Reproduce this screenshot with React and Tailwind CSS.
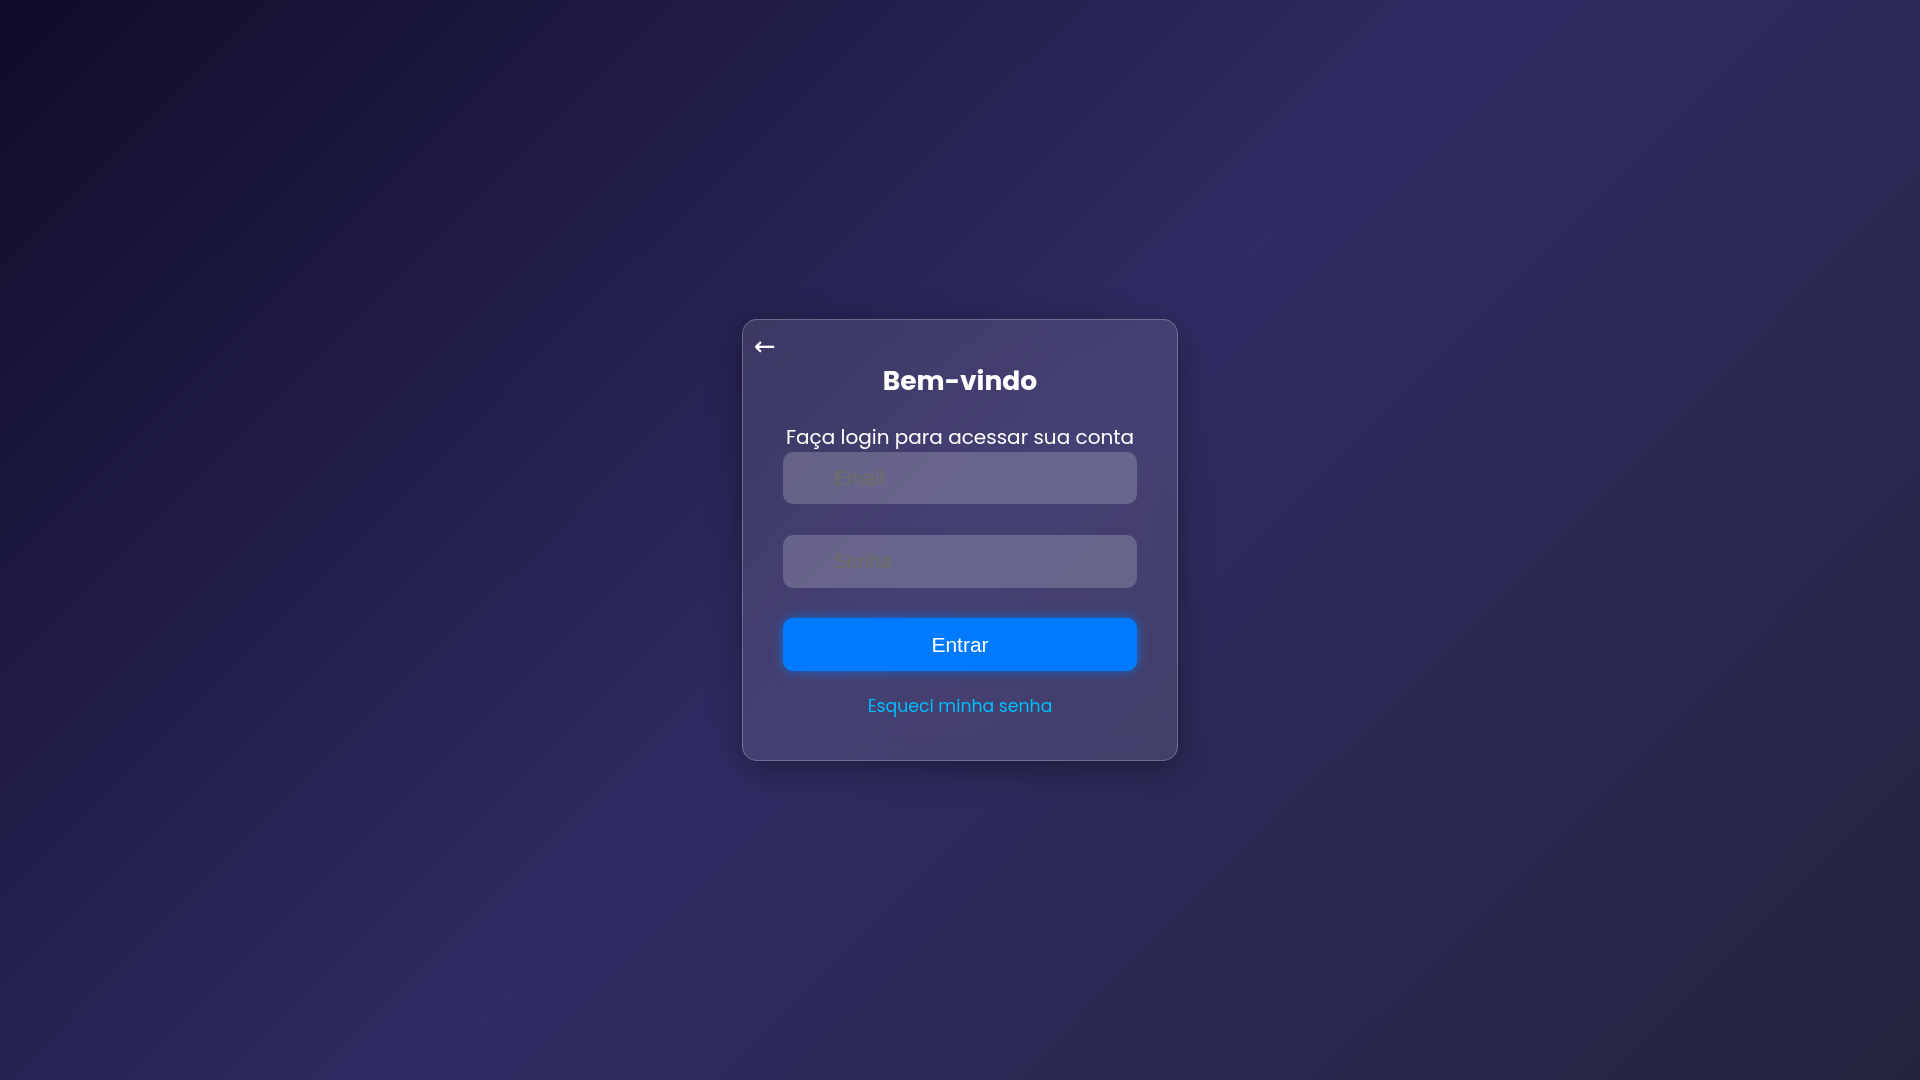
import React, { useState } from "react";

function App() {
  const [email, setEmail] = useState("");
  const [senha, setSenha] = useState("");

  return (
    <div className="min-h-screen w-full flex items-center justify-center bg-[linear-gradient(135deg,#0f0c29_0%,#302b63_50%,#24243e_100%)] font-['Poppins','Open_Sans',sans-serif]">
      {/* CARD */}
      <div className="relative w-[436px] rounded-[15px] border border-white/25 bg-white/10 backdrop-blur-md shadow-[0_8px_32px_rgba(0,0,0,0.35)] px-10 pt-[43px] pb-[42px] flex flex-col items-center text-white">
        <button className="absolute left-[11px] top-[11px] text-white text-[26px] leading-[30px] font-['DejaVu_Sans',sans-serif]">
          ←
        </button>

        <h1 className="text-[26.5px] leading-[36px] font-bold">Bem-vindo</h1>
        <p className="mt-[23px] text-[20px] leading-[30px] whitespace-nowrap">
          Faça login para acessar sua conta
        </p>

        <form className="w-full flex flex-col" onSubmit={(e) => e.preventDefault()}>
          <input
            type="email"
            value={email}
            onChange={(e) => setEmail(e.target.value)}
            placeholder="Email"
            className="w-full h-[52px] rounded-[10px] bg-white/20 pl-[51px] pr-4 text-[20px] text-white outline-none placeholder:text-[#6e7063] font-['Liberation_Sans',sans-serif]"
          />
          <input
            type="password"
            value={senha}
            onChange={(e) => setSenha(e.target.value)}
            placeholder="Senha"
            className="mt-[31px] w-full h-[53px] rounded-[10px] bg-white/20 pl-[51px] pr-4 text-[20px] text-white outline-none placeholder:text-[#6e7063] font-['Liberation_Sans',sans-serif]"
          />
          <button
            type="submit"
            className="mt-[30px] w-full h-[53px] rounded-[10px] bg-[#007bff] text-white text-[21px] shadow-[0_0_12px_rgba(0,123,255,0.7)] font-['Liberation_Sans',sans-serif]"
          >
            Entrar
          </button>
        </form>

        <a href="#" className="mt-[23px] text-[17.3px] leading-[24px] text-[#00bfff]">
          Esqueci minha senha
        </a>
      </div>
    </div>
  );
}

export default App;
